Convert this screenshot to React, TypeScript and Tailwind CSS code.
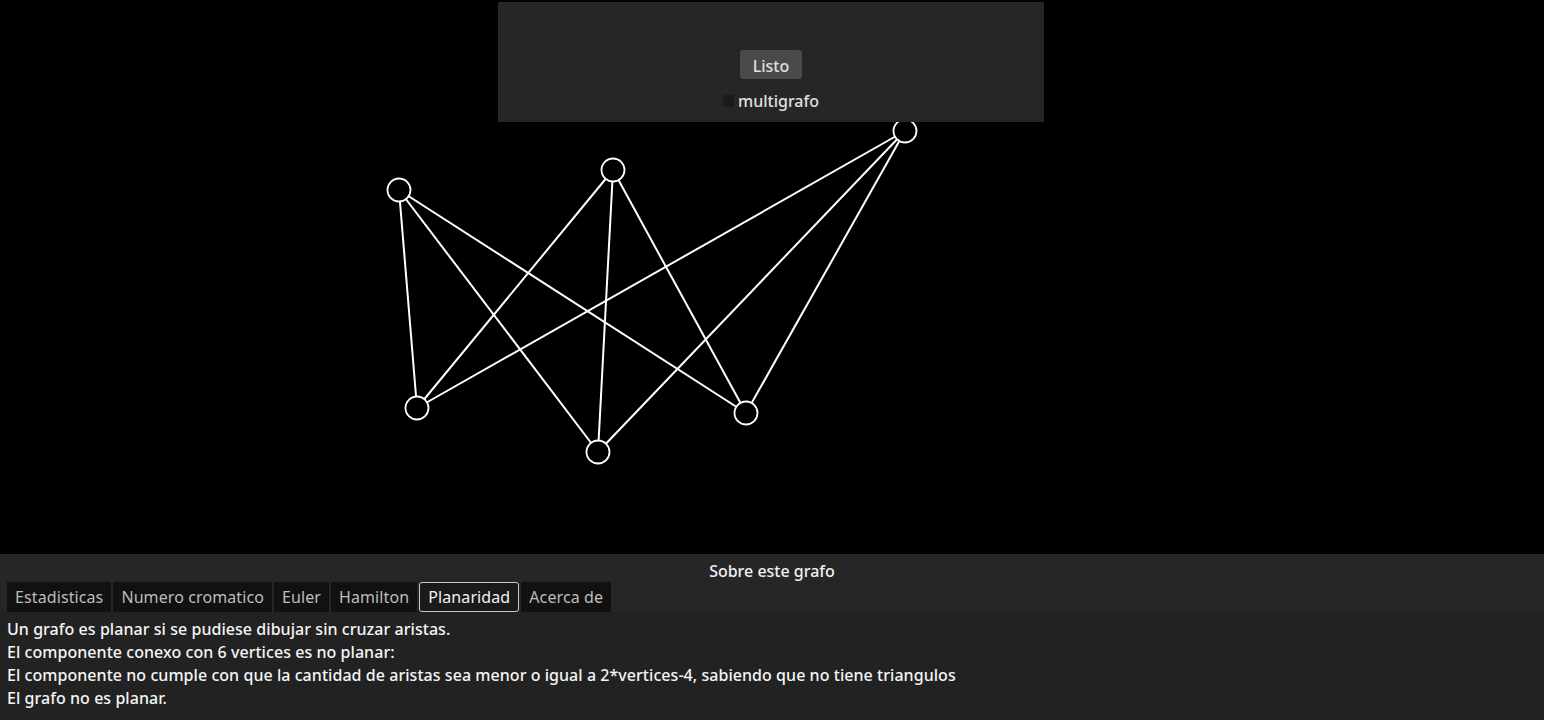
import React from "react";

const nodes: [number, number][] = [
  [399, 190],
  [613, 170],
  [905, 131],
  [417, 408],
  [598, 452],
  [746, 413],
];
const edges: [number, number][] = [
  [0, 3], [0, 4], [0, 5],
  [1, 3], [1, 4], [1, 5],
  [2, 3], [2, 4], [2, 5],
];

const tabs = ["Estadisticas", "Numero cromatico", "Euler", "Hamilton", "Planaridad", "Acerca de"];

export default function App() {
  return (
    <div
      className="w-[1544px] h-[720px] bg-black flex flex-col overflow-hidden text-[#e0e0e0]"
      style={{ fontFamily: '"Noto Sans", "Open Sans", sans-serif' }}
    >
      <div className="relative h-[554px] shrink-0">
        <svg className="absolute inset-0" width="1544" height="554">
          {edges.map(([a, b], i) => (
            <line
              key={i}
              x1={nodes[a][0]}
              y1={nodes[a][1]}
              x2={nodes[b][0]}
              y2={nodes[b][1]}
              stroke="white"
              strokeWidth={2}
            />
          ))}
          {nodes.map(([x, y], i) => (
            <circle key={i} cx={x} cy={y} r={11.5} fill="black" stroke="white" strokeWidth={1.8} />
          ))}
        </svg>
        <div className="absolute left-[498px] top-[2px] w-[546px] h-[120px] bg-[#262626] flex flex-col items-center pt-[48px]">
          <button className="h-[29px] w-[62px] rounded-[3px] bg-[#4a4a4a] text-[16px] text-[#e0e0e0] font-medium leading-none pt-[2px]">
            Listo
          </button>
          <div className="flex items-center gap-[4px] mt-[11px]">
            <div className="w-[11px] h-[12px] rounded-[2px] bg-[#1a1a1a]" />
            <span className="text-[16px] leading-[22px] text-[#e0e0e0] font-medium">multigrafo</span>
          </div>
        </div>
      </div>
      <div className="flex-1 bg-[#262626] flex flex-col">
        <div className="h-[28px] pt-[6px] flex justify-center text-[16px] leading-[22px] text-[#f0f0f0] font-medium">
          Sobre este grafo
        </div>
        <div className="flex gap-[2px] px-[7px]">
          {tabs.map((t) => {
            const active = t === "Planaridad";
            return (
              <div
                key={t}
                className={
                  active
                    ? "h-[30px] px-[8px] flex items-center bg-[#1a1a1a] border border-[#c8c8c8] rounded-[3px] text-[16px] text-[#f2f2f2] tracking-[0.1px]"
                    : "h-[30px] px-[8px] flex items-center bg-[#111111] text-[16px] text-[#bdbdbd] tracking-[0.1px]"
                }
              >
                {t}
              </div>
            );
          })}
        </div>
        <div className="flex-1 bg-[#222222] px-[7px] pt-[6px] text-[16px] leading-[23px] text-[#f5f5f5] font-medium tracking-[0.05px]">
          <div>Un grafo es planar si se pudiese dibujar sin cruzar aristas.</div>
          <div>El componente conexo con 6 vertices es no planar:</div>
          <div>El componente no cumple con que la cantidad de aristas sea menor o igual a 2*vertices-4, sabiendo que no tiene triangulos</div>
          <div>El grafo no es planar.</div>
        </div>
      </div>
    </div>
  );
}
